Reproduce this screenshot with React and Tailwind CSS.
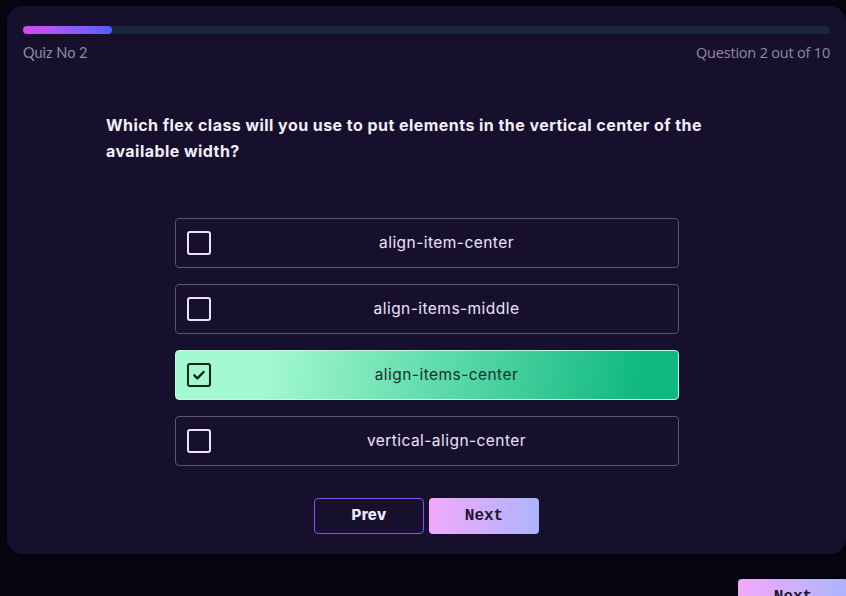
import { useState } from 'react';

const options = [
  'align-item-center',
  'align-items-middle',
  'align-items-center',
  'vertical-align-center',
];

const CheckBox = ({ checked }) => (
  <span
    className={`flex h-6 w-6 shrink-0 items-center justify-center rounded-[3px] ${
      checked ? 'border-[2.5px] border-[#0f231d]' : 'border-2 border-[#ece1fb]'
    }`}
  >
    {checked && (
      <svg viewBox="0 0 24 24" className="h-4 w-4" fill="none" stroke="#0f1f1a" strokeWidth="3.5" strokeLinecap="round" strokeLinejoin="round">
        <path d="M5 12.5l4.5 4.5L19 7.5" />
      </svg>
    )}
  </span>
);

export default function App() {
  const [selected, setSelected] = useState(2);

  return (
    <div className="h-[596px] w-[846px] overflow-hidden bg-[#05050f] pl-[7px] pt-[6px] font-['Inter',sans-serif]">
      {/* Quiz card */}
      <div className="w-[839px] rounded-2xl bg-[#17102d] px-4 pb-[20px] pt-5">
        <div className="h-2 w-full rounded-full bg-[#1b2636]">
          <div className="h-2 w-[89px] rounded-full bg-gradient-to-r from-[#d946ef] to-[#4f5dff]" />
        </div>
        <div className="mt-[9px] flex justify-between text-sm text-[#8f8aa0]">
          <span className="font-['Lato',sans-serif] text-[14.5px]">Quiz No 2</span>
          <span className="font-['Open_Sans',sans-serif] text-[14.5px] tracking-[-0.2px]">Question 2 out of 10</span>
        </div>

        <h2 className="mt-[48px] pl-[83px] pr-[100px] text-[16px] font-bold leading-[26px] tracking-[0.45px] text-[#f2eef8]">
          Which flex class will you use to put elements in the vertical center of the available width?
        </h2>

        <div className="mt-[54px] flex flex-col items-center gap-4">
          {options.map((opt, i) => {
            const active = selected === i;
            return (
              <button
                key={opt}
                onClick={() => setSelected(i)}
                className={`flex h-[50px] w-[504px] items-center rounded-[4px] border px-[11px] ${
                  active
                    ? 'border-[#c4f7dc] bg-[linear-gradient(100deg,#a3f9d0_18%,#10b981_92%)] text-[#16322a]'
                    : 'border-[#5b5571] text-[#ebe4f6]'
                }`}
              >
                <CheckBox checked={active} />
                <span className="flex-1 pl-[16px] text-center text-[15.5px] tracking-[0.45px]">{opt}</span>
              </button>
            );
          })}
        </div>

        <div className="mt-8 flex justify-center gap-[5px]">
          <button className="h-9 w-[110px] rounded-[4px] border border-[#8254e8] text-[15px] font-extrabold tracking-[0.3px] text-[#efe9fb]">
            Prev
          </button>
          <button className="h-9 w-[110px] rounded-[4px] bg-gradient-to-r from-[#f1a9fb] to-[#abb4fd] font-['Liberation_Mono',monospace] text-[16px] font-bold text-[#1c1530]">
            Next
          </button>
        </div>
      </div>

      <div className="mt-[25px] flex pl-[731px]">
        <button className="h-9 w-[110px] shrink-0 rounded-[4px] bg-gradient-to-r from-[#f1a9fb] to-[#abb4fd] font-['Liberation_Mono',monospace] text-[16px] font-bold text-[#1c1530]">
          Next
        </button>
      </div>
    </div>
  );
}
